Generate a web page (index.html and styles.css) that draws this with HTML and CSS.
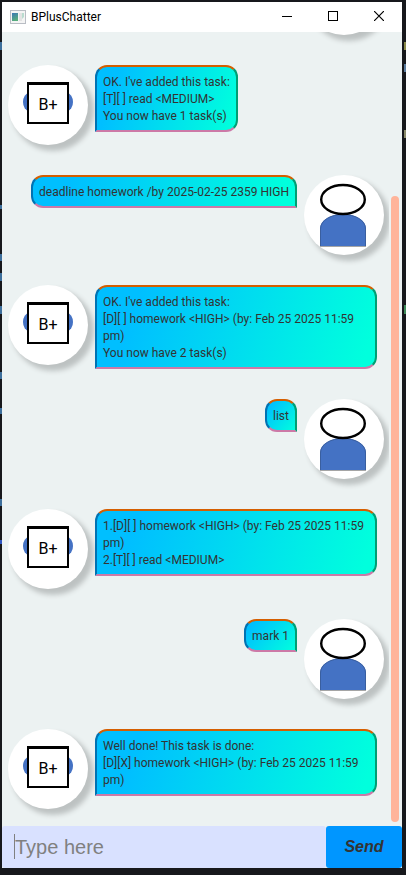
FILE: index.html
```html
<!DOCTYPE html>
<html lang="en">
<head>
<meta charset="utf-8">
<meta name="viewport" content="width=device-width, initial-scale=1">
<title>BPlusChatter</title>
<link rel="stylesheet" href="styles.css">
</head>
<body>
<svg class="defs" aria-hidden="true">
  <symbol id="user" viewBox="0 0 80 80">
    <path d="M16 71V54C16 45 27 39 39 39S62 45 62 54V71Z" fill="#4472c4"/>
    <path d="M16.500 71V54C16.500 45 27 39.500 39 39.500S61.500 45 61.500 54V71" fill="none" stroke="#3a5f9f"/>
    <path d="M16 71.500H62" stroke="#a5a5a5"/>
    <ellipse cx="39" cy="24.500" rx="21.800" ry="14.500" fill="#fff" stroke="#000" stroke-width="2.400"/>
  </symbol>
  <symbol id="bot" viewBox="0 0 80 80">
    <ellipse cx="21" cy="37" rx="6" ry="9" fill="#4472c4"/>
    <ellipse cx="59" cy="37" rx="6" ry="9" fill="#4472c4"/>
    <rect x="20" y="18" width="40" height="40" fill="#fff" stroke="#000" stroke-width="2"/>
    <path d="M19 18.500H61" stroke="#000" stroke-width="3"/>
  </symbol>
</svg>
<div class="window">
  <header class="titlebar">
    <svg class="app-icon" width="16" height="14" viewBox="0 0 16 14" aria-hidden="true">
      <defs><linearGradient id="screen" x2="0.400" y2="1"><stop stop-color="#3b77b5"/><stop offset="1" stop-color="#58ad7c"/></linearGradient></defs>
      <rect x="0.500" y="0.500" width="15" height="13" fill="#f4f4f4" stroke="#b9bdc4"/>
      <rect x="2" y="3" width="6" height="8" fill="url(#screen)"/>
      <rect x="9" y="3" width="3" height="8" fill="#e3e3e3"/>
      <path d="M12 3h2v4l-2 2z" fill="#b9dccf"/>
    </svg>
    <h1 class="title">BPlusChatter</h1>
    <button class="win-btn" type="button" aria-label="Minimize"><svg width="10" height="10"><path d="M0 5.500H10" stroke="#000"/></svg></button>
    <button class="win-btn" type="button" aria-label="Maximize"><svg width="10" height="10"><rect x="0.500" y="0.500" width="9" height="9" fill="none" stroke="#000"/></svg></button>
    <button class="win-btn" type="button" aria-label="Close"><svg width="10" height="10"><path d="M0 0L10 10M10 0L0 10" stroke="#000" stroke-width="1.200"/></svg></button>
  </header>
  <div class="chat">
    <main class="messages">
      <div class="row user"><svg class="avatar"><use href="#user"/></svg></div>
      <div class="row"><svg class="avatar"><use href="#bot"/><text x="40" y="45">B+</text></svg><p class="bubble">OK. I've added this task:<br>[T][ ] read &lt;MEDIUM&gt;<br>You now have 1 task(s)</p></div>
      <div class="row user"><p class="bubble line">deadline homework /by 2025-02-25 2359 HIGH</p><svg class="avatar"><use href="#user"/></svg></div>
      <div class="row"><svg class="avatar"><use href="#bot"/><text x="40" y="45">B+</text></svg><p class="bubble">OK. I've added this task:<br>[D][ ] homework &lt;HIGH&gt; (by: Feb 25 2025 11:59 pm)<br>You now have 2 task(s)</p></div>
      <div class="row user"><p class="bubble short">list</p><svg class="avatar"><use href="#user"/></svg></div>
      <div class="row"><svg class="avatar"><use href="#bot"/><text x="40" y="45">B+</text></svg><p class="bubble">1.[D][ ] homework &lt;HIGH&gt; (by: Feb 25 2025 11:59 pm)<br>2.[T][ ] read &lt;MEDIUM&gt;</p></div>
      <div class="row user"><p class="bubble short">mark 1</p><svg class="avatar"><use href="#user"/></svg></div>
      <div class="row"><svg class="avatar"><use href="#bot"/><text x="40" y="45">B+</text></svg><p class="bubble">Well done! This task is done:<br>[D][X] homework &lt;HIGH&gt; (by: Feb 25 2025 11:59 pm)</p></div>
    </main>
    <div class="scrollbar"><div class="thumb"></div></div>
  </div>
  <form class="composer">
    <input class="entry" type="text" placeholder="Type here" aria-label="Message">
    <button class="send" type="button">Send</button>
  </form>
</div>
</body>
</html>
```
FILE: styles.css
```css
* {
  box-sizing: border-box;
}

/* Dark desktop behind the window, with slivers of editor text at its edges */
body {
  margin: 0;
  height: 100vh;
  padding: 2px 4px 7px 2px;
  background:
    linear-gradient(#3d6f9c, #3d6f9c) 0 42px / 2px 8px no-repeat,
    linear-gradient(#3d6f9c, #3d6f9c) 0 205px / 2px 4px no-repeat,
    linear-gradient(#3d6f9c, #3d6f9c) 0 254px / 2px 7px no-repeat,
    linear-gradient(#3d6f9c, #3d6f9c) 0 273px / 2px 8px no-repeat,
    linear-gradient(#3d6f9c, #3d6f9c) 0 306px / 2px 8px no-repeat,
    linear-gradient(#3d6f9c, #3d6f9c) 0 372px / 2px 7px no-repeat,
    linear-gradient(#3d6f9c, #3d6f9c) 0 408px / 2px 6px no-repeat,
    linear-gradient(#3d6f9c, #3d6f9c) 0 499px / 2px 7px no-repeat,
    linear-gradient(#2f55c0, #2f55c0) 0 540px / 2px 4px no-repeat,
    linear-gradient(#8a8a4a, #8a8a4a) 100% 42px / 2px 8px no-repeat,
    linear-gradient(#5a7a9c, #5a7a9c) 100% 64px / 2px 8px no-repeat,
    linear-gradient(#8a8a6a, #8a8a6a) 100% 130px / 2px 8px no-repeat,
    linear-gradient(#3f8a5a, #3f8a5a) 100% 305px / 2px 9px no-repeat,
    #17181c;
  font-family: Roboto, "Open Sans", sans-serif;
  font-size: 12px;
  line-height: 17px;
}

.defs {
  position: absolute;
  width: 0;
  height: 0;
}

.window {
  display: flex;
  flex-direction: column;
  height: 100%;
  background: #fff;
}

.titlebar {
  display: flex;
  align-items: center;
  flex: none;
  height: 30px;
  padding-left: 8px;
}

.title {
  flex: 1;
  margin: 0 0 0 5px;
  font-size: 12px;
  font-weight: 400;
  color: #000;
}

.win-btn {
  display: flex;
  align-items: center;
  justify-content: center;
  width: 46px;
  height: 100%;
  padding: 0 0 2px;
  border: 0;
  background: none;
}

.chat {
  display: flex;
  flex: 1;
  min-height: 0;
  background: #ecf2f2;
}

.messages {
  display: flex;
  flex: 1;
  flex-direction: column;
  justify-content: flex-end;
  gap: 30px;
  min-width: 0;
  padding: 0 5px 17px 6px;
  overflow: hidden;
}

.row {
  display: flex;
  flex: none;
  align-items: flex-start;
  gap: 7px;
}

.row.user {
  justify-content: flex-end;
}

.avatar {
  flex: none;
  width: 80px;
  height: 80px;
  border-radius: 50%;
  background: #fff;
  box-shadow: 5px 5px 5px 1px #bdc2c2;
}

.avatar text {
  font-family: Roboto, sans-serif;
  font-size: 16px;
  text-anchor: middle;
}

.bubble {
  margin: 0 7px 0 0;
  padding: 7px 6px 5px;
  border: 2px solid;
  border-color: #d55e00 #009e73 #cc79a7 #0072b2;
  border-radius: 12px 12px 12px 0;
  background: linear-gradient(107deg, #00bfff 15%, #00ffdd 95%) border-box;
  color: #333;
}

.user .bubble {
  margin: 0;
  border-radius: 12px 12px 0 12px;
}

.bubble.line {
  background: linear-gradient(97deg, #00bfff 15%, #00ffdd 95%) border-box;
}

.bubble.short {
  background: linear-gradient(130deg, #00bfff 15%, #00ffdd 95%) border-box;
}

.scrollbar {
  display: flex;
  flex: none;
  align-items: flex-end;
  width: 13px;
  padding: 4px 3px 4px 2px;
}

.thumb {
  width: 100%;
  height: calc(80% - 3px);
  border-radius: 4px;
  background: #ffb49a;
}

.composer {
  display: flex;
  flex: none;
  height: 42px;
  background: #ecf2f2;
}

.entry {
  flex: 1;
  min-width: 0;
  padding: 0 13px;
  border: 0;
  border-radius: 3px;
  background: linear-gradient(#808080, #808080) 12px 8px / 1px 25px no-repeat #d9e1ff;
  color: #333;
  font: 20px "Liberation Sans", Arial, sans-serif;
}

.entry::placeholder {
  color: #808080;
  opacity: 1;
}

.send {
  width: 76px;
  padding: 0;
  border: 0;
  border-radius: 3px;
  background: #0096ff;
  color: #333;
  font: italic bold 16px "Liberation Sans", Arial, sans-serif;
}
```
